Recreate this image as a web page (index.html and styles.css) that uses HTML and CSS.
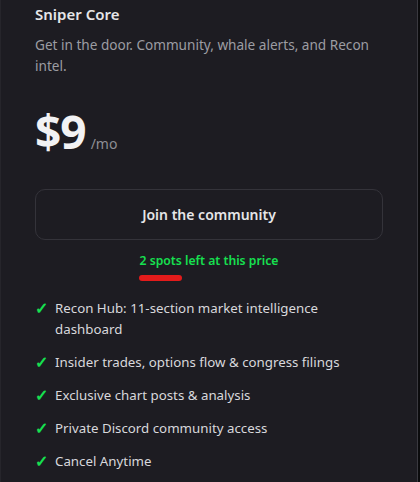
FILE: index.html
```html
<!DOCTYPE html>
<html lang="en">
<head>
  <meta charset="UTF-8" />
  <title>Sniper Core</title>
  <link rel="stylesheet" href="styles.css">
</head>
<body>
  <div class="card">
    <h2 class="plan-name">Sniper Core</h2>
    <p class="plan-desc">Get in the door. Community, whale alerts, and Recon intel.</p>
    <div class="price">
      <span class="amount">$9</span>
      <span class="period">/mo</span>
    </div>
    <button class="join-btn">Join the community</button>
    <div class="spots">
      <span class="spots-text">2 spots left at this price</span>
      <span class="spots-mark"></span>
    </div>
    <ul class="features">
      <li><span class="check">✓</span><span>Recon Hub: 11-section market intelligence dashboard</span></li>
      <li><span class="check">✓</span><span>Insider trades, options flow &amp; congress filings</span></li>
      <li><span class="check">✓</span><span>Exclusive chart posts &amp; analysis</span></li>
      <li><span class="check">✓</span><span>Private Discord community access</span></li>
      <li><span class="check">✓</span><span>Cancel Anytime</span></li>
    </ul>
  </div>
</body>
</html>
```

FILE: styles.css
```css
html, body {
  margin: 0;
  padding: 0;
  height: 100%;
  background-color: #0b0b0d;
  font-family: 'Noto Sans', 'Open Sans', sans-serif;
}

.card {
  box-sizing: border-box;
  width: 418px;
  height: 482px;
  background-color: #1d1c22;
  border-left: 1px solid #26252b;
  border-right: 1px solid #3a3940;
  padding: 3px 34px 0 34px;
  overflow: hidden;
}

.plan-name {
  margin: 0;
  font-size: 15px;
  font-weight: 600;
  color: #e6e6e8;
  line-height: 22px;
}

.plan-desc {
  margin: 9px 0 0 0;
  font-size: 13.6px;
  line-height: 21px;
  color: #9c9ca2;
}

.price {
  margin-top: 29px;
  display: flex;
  align-items: baseline;
  gap: 5px;
}

.amount {
  font-size: 46px;
  font-weight: 700;
  color: #f2f2f4;
  line-height: 52px;
  letter-spacing: -1px;
}

.period {
  font-size: 14px;
  color: #8e8e94;
}

.join-btn {
  display: block;
  width: 100%;
  height: 51px;
  margin-top: 32px;
  background: transparent;
  border: 1px solid #34333a;
  border-radius: 10px;
  color: #e6e6e8;
  font-family: inherit;
  font-size: 14px;
  font-weight: 600;
  cursor: pointer;
}

.spots {
  margin-top: 12px;
  display: flex;
  flex-direction: column;
  align-items: center;
}

.spots-text {
  color: #16e050;
  font-size: 12.2px;
  font-weight: 600;
  line-height: 18px;
}

.spots-mark {
  align-self: flex-start;
  margin-left: 104px;
  margin-top: 5px;
  width: 43px;
  height: 6px;
  border-radius: 3px;
  background-color: #e31b1b;
}

.features {
  list-style: none;
  margin: 17px 0 0 0;
  padding: 0;
  display: flex;
  flex-direction: column;
  gap: 12px;
}

.features li {
  display: flex;
  gap: 8px;
  font-size: 13.3px;
  line-height: 21px;
  color: #d8d8dc;
}

.check {
  color: #16e050;
  font-size: 16px;
  font-weight: 700;
  width: 12px;
  flex-shrink: 0;
}
```
